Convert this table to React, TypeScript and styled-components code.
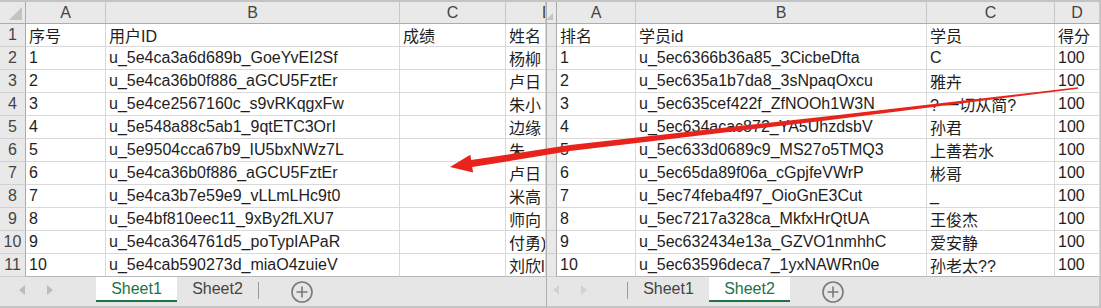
import React from "react";
import styled, { createGlobalStyle } from "styled-components";

const GlobalStyle = createGlobalStyle`
  body {
    margin: 0;
    overflow: hidden;
    font-family: "Liberation Sans", "Noto Sans CJK SC", sans-serif;
  }
`;

const Screen = styled.div`
  position: relative;
  display: flex;
  width: 1101px;
  height: 308px;
  box-sizing: border-box;
  padding: 2px 0 2px;
  background-color: #c4c4c4;
`;

const Window = styled.div<{ $width: number; $edge?: boolean }>`
  display: flex;
  flex-direction: column;
  width: ${(p) => p.$width}px;
  box-sizing: border-box;
  border-left: ${(p) => (p.$edge ? "1px solid #b0b0b0" : "none")};
  border-right: ${(p) => (p.$edge ? "2px solid #c4c4c4" : "none")};
  background-color: #e6e6e6;
`;

const Grid = styled.div<{ $cols: string }>`
  display: grid;
  grid-template-columns: ${(p) => p.$cols};
  grid-template-rows: 22px repeat(11, 23px);
  background-color: #ffffff;
  font-size: 16px;
  color: #1e1e1e;
`;

const ColHead = styled.div`
  box-sizing: border-box;
  display: flex;
  align-items: center;
  justify-content: center;
  overflow: hidden;
  background-color: #e9e9e9;
  border-right: 1px solid #c8c8c8;
  border-bottom: 1px solid #ababab;
  color: #444444;
  white-space: nowrap;
`;

// column letter whose right part is hidden behind the neighbouring window
const ClippedHead = styled(ColHead)`
  justify-content: flex-start;
  padding-left: 36px;

  span {
    display: inline-block;
    width: 4px;
    overflow: hidden;
  }
`;

const Corner = styled.div<{ $narrow?: boolean }>`
  position: relative;
  box-sizing: border-box;
  background-color: #e9e9e9;
  border-right: 1px solid #ababab;
  border-bottom: 1px solid #ababab;

  &::after {
    content: "";
    position: absolute;
    right: 3px;
    bottom: 3px;
    border-style: solid;
    border-width: 0 0 ${(p) => (p.$narrow ? 7 : 13)}px ${(p) => (p.$narrow ? 7 : 13)}px;
    border-color: transparent transparent #c3c3c3 transparent;
  }
`;

const RowHead = styled.div`
  box-sizing: border-box;
  display: flex;
  align-items: center;
  justify-content: center;
  overflow: hidden;
  background-color: #e9e9e9;
  border-right: 1px solid #ababab;
  border-bottom: 1px solid #d0d0d0;
  color: #444444;
`;

const Cell = styled.div<{ $last?: boolean }>`
  box-sizing: border-box;
  display: flex;
  align-items: center;
  padding-left: 3px;
  overflow: hidden;
  white-space: nowrap;
  border-right: 1px solid #d9d9d9;
  border-bottom: 1px solid ${(p) => (p.$last ? "#b8b8b8" : "#d9d9d9")};
`;

const TabBar = styled.div`
  display: flex;
  align-items: flex-start;
  height: 29px;
  background-color: #e6e6e6;
  font-size: 16px;
`;

const Arrows = styled.div<{ $width: number; $pad: number; $shade: string }>`
  display: flex;
  align-items: center;
  gap: 20px;
  width: ${(p) => p.$width}px;
  height: 25px;
  padding-left: ${(p) => p.$pad}px;
  box-sizing: border-box;
  color: ${(p) => p.$shade};
`;

const Separator = styled.div`
  width: 1px;
  height: 17px;
  margin-top: 5px;
  background-color: #9a9a9a;
`;

const Tab = styled.div<{ $active?: boolean }>`
  display: flex;
  align-items: center;
  justify-content: center;
  width: 81px;
  height: 25px;
  box-sizing: border-box;
  background-color: ${(p) => (p.$active ? "#ffffff" : "transparent")};
  border-bottom: 2px solid ${(p) => (p.$active ? "#217346" : "transparent")};
  color: ${(p) => (p.$active ? "#217346" : "#444444")};
`;

const AddSheet = styled.div`
  display: flex;
  align-items: center;
  justify-content: center;
  width: 22px;
  height: 22px;
  margin: 4px 0 0 32px;
  color: #7a7a7a;
`;

const Overlay = styled.svg`
  position: absolute;
  left: 0;
  top: 0;
  pointer-events: none;
`;

const Triangle = ({ dir }: { dir: "left" | "right" }) => (
  <svg width="7" height="10" viewBox="0 0 7 10">
    <path d={dir === "left" ? "M6 0 L0 5 L6 10 Z" : "M1 0 L7 5 L1 10 Z"} fill="currentColor" />
  </svg>
);

const PlusCircle = () => (
  <svg width="22" height="22" viewBox="0 0 22 22">
    <circle cx="11" cy="11" r="10" fill="none" stroke="currentColor" strokeWidth="1.6" />
    <path d="M11 5.5 V16.5 M5.5 11 H16.5" stroke="currentColor" strokeWidth="1.6" />
  </svg>
);

const leftIds = [
  "u_5e4ca3a6d689b_GoeYvEI2Sf",
  "u_5e4ca36b0f886_aGCU5FztEr",
  "u_5e4ce2567160c_s9vRKqgxFw",
  "u_5e548a88c5ab1_9qtETC3OrI",
  "u_5e9504cca67b9_IU5bxNWz7L",
  "u_5e4ca36b0f886_aGCU5FztEr",
  "u_5e4ca3b7e59e9_vLLmLHc9t0",
  "u_5e4bf810eec11_9xBy2fLXU7",
  "u_5e4ca364761d5_poTypIAPaR",
  "u_5e4cab590273d_miaO4zuieV",
];

const leftNames = ["杨柳", "卢日", "朱小", "边缘", "朱", "卢日", "米高", "师向", "付勇)", "刘欣l"];

const rightIds = [
  "u_5ec6366b36a85_3CicbeDfta",
  "u_5ec635a1b7da8_3sNpaqOxcu",
  "u_5ec635cef422f_ZfNOOh1W3N",
  "u_5ec634acac872_YA5UhzdsbV",
  "u_5ec633d0689c9_MS27o5TMQ3",
  "u_5ec65da89f06a_cGpjfeVWrP",
  "u_5ec74feba4f97_OioGnE3Cut",
  "u_5ec7217a328ca_MkfxHrQtUA",
  "u_5ec632434e13a_GZVO1nmhhC",
  "u_5ec63596deca7_1yxNAWRn0e",
];

const rightNames = ["C", "雅卉", "? 一切从简?", "孙君", "上善若水", "彬哥", "_", "王俊杰", "爱安静", "孙老太??"];

function ScoreSheet() {
  return (
    <Window $width={546}>
      <Grid $cols="26px 80px 294px 106px 40px">
        <Corner />
        <ColHead>A</ColHead>
        <ColHead>B</ColHead>
        <ColHead>C</ColHead>
        <ClippedHead>
          <span>D</span>
        </ClippedHead>

        <RowHead>1</RowHead>
        <Cell>序号</Cell>
        <Cell>用户ID</Cell>
        <Cell>成绩</Cell>
        <Cell>姓名</Cell>

        {leftIds.map((id, i) => (
          <React.Fragment key={i}>
            <RowHead>{i + 2}</RowHead>
            <Cell $last={i === 9}>{i + 1}</Cell>
            <Cell $last={i === 9}>{id}</Cell>
            <Cell $last={i === 9} />
            <Cell $last={i === 9}>{leftNames[i]}</Cell>
          </React.Fragment>
        ))}
      </Grid>
      <TabBar>
        <Arrows $width={96} $pad={19} $shade="#bcbcbc">
          <Triangle dir="left" />
          <Triangle dir="right" />
        </Arrows>
        <Tab $active>Sheet1</Tab>
        <Tab>Sheet2</Tab>
        <Separator />
        <AddSheet>
          <PlusCircle />
        </AddSheet>
      </TabBar>
    </Window>
  );
}

function RankSheet() {
  return (
    <Window $width={555} $edge>
      <Grid $cols="10px 79px 291px 128px 45px">
        <Corner $narrow />
        <ColHead>A</ColHead>
        <ColHead>B</ColHead>
        <ColHead>C</ColHead>
        <ColHead>D</ColHead>

        <RowHead />
        <Cell>排名</Cell>
        <Cell>学员id</Cell>
        <Cell>学员</Cell>
        <Cell>得分</Cell>

        {rightIds.map((id, i) => (
          <React.Fragment key={i}>
            <RowHead />
            <Cell $last={i === 9}>{i + 1}</Cell>
            <Cell $last={i === 9}>{id}</Cell>
            <Cell $last={i === 9}>{rightNames[i]}</Cell>
            <Cell $last={i === 9}>100</Cell>
          </React.Fragment>
        ))}
      </Grid>
      <TabBar>
        <Arrows $width={80} $pad={6} $shade="#d2d2d2">
          <Triangle dir="left" />
          <Triangle dir="right" />
        </Arrows>
        <Separator />
        <Tab>Sheet1</Tab>
        <Tab $active>Sheet2</Tab>
        <AddSheet>
          <PlusCircle />
        </AddSheet>
      </TabBar>
    </Window>
  );
}

export default function App() {
  return (
    <>
      <GlobalStyle />
      <Screen>
        <ScoreSheet />
        <RankSheet />
        {/* red pointer drawn across both sheets */}
        <Overlay width="1101" height="308" viewBox="0 0 1101 308">
          <polygon
            fill="#e8231b"
            points="450,167 473.1,172.5 472.2,167.1 570,151 830,120 1078,88.8 1078,87.2 830,116 570,145 471.2,160.1 470.3,154.7"
          />
        </Overlay>
      </Screen>
    </>
  );
}
